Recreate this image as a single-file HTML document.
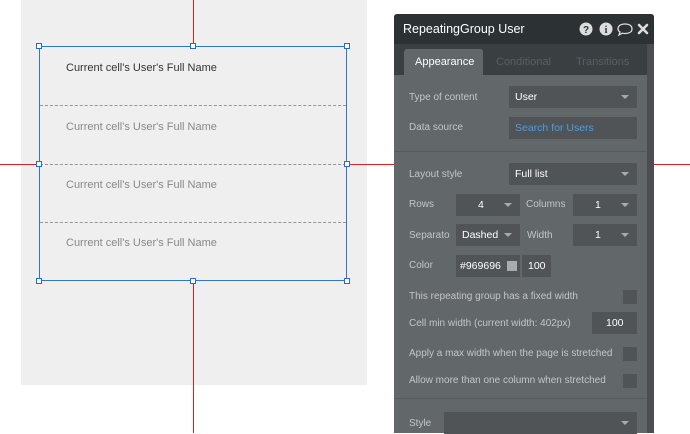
<!DOCTYPE html><html><head><style>
*{margin:0;padding:0;box-sizing:border-box}
body{width:690px;height:433px;background:#fff;position:relative;overflow:hidden;font-family:"Liberation Sans",sans-serif}
.a{position:absolute}
.cell{position:absolute;left:66px;font-size:11px;color:#888}
.p{font-size:10px;color:#c3c6c8}
.in{position:absolute;background:#505457;color:#fff;font-size:10.5px;padding-left:6px;display:flex;align-items:center}
.dd:after{content:"";position:absolute;right:8px;top:50%;margin-top:-2px;border-left:4px solid transparent;border-right:4px solid transparent;border-top:4px solid #aaa}
.cb{position:absolute;left:623px;width:14px;height:14px;background:#505457}
.h{position:absolute;width:6px;height:6px;border:1px solid #1a6ee0;background:#fff}
</style></head><body>
<div class="a" style="left:21px;top:0;width:346px;height:385px;background:#efefef"></div>
<div class="a" style="left:193px;top:0;width:1px;height:433px;background:#e02020"></div>
<div class="a" style="left:0;top:164px;width:690px;height:1px;background:#e02020"></div>
<div class="a" style="left:39px;top:46px;width:308px;height:235px;border:1.5px solid #2f78c8;background:#efefef"></div>
<div class="a" style="left:40px;top:105px;width:306px;border-top:1px dashed #969696"></div>
<div class="a" style="left:40px;top:164px;width:306px;border-top:1px dashed #969696"></div>
<div class="a" style="left:40px;top:222px;width:306px;border-top:1px dashed #969696"></div>
<div class="cell" style="top:62px;color:#333">Current cell's User's Full Name</div>
<div class="cell" style="top:121px">Current cell's User's Full Name</div>
<div class="cell" style="top:179px">Current cell's User's Full Name</div>
<div class="cell" style="top:237px">Current cell's User's Full Name</div>
<div class="h" style="left:36px;top:43px"></div><div class="h" style="left:190px;top:43px"></div><div class="h" style="left:344px;top:43px"></div>
<div class="h" style="left:36px;top:161px"></div><div class="h" style="left:344px;top:161px"></div>
<div class="h" style="left:36px;top:278px"></div><div class="h" style="left:190px;top:278px"></div><div class="h" style="left:344px;top:278px"></div>

<div class="a" style="left:394px;top:14px;width:260px;height:419px;background:#62676a;border-radius:3px 3px 0 0"></div>
<div class="a" style="left:647px;top:44px;width:7px;height:389px;background:#4a4e51"></div>
<div class="a" style="left:394px;top:14px;width:260px;height:30px;background:#2c3133;border-radius:3px 3px 0 0"></div>
<div class="a" style="left:403px;top:22px;font-size:12.5px;color:#fff">RepeatingGroup User</div>
<svg class="a" style="left:578px;top:21px" width="74" height="16" viewBox="0 0 74 16">
<circle cx="8" cy="8" r="6.5" fill="#ddd"/><text x="8" y="12" font-size="10" font-weight="bold" text-anchor="middle" fill="#2c3133" font-family="Liberation Sans">?</text>
<circle cx="28" cy="8" r="6.5" fill="#ddd"/><text x="28" y="12" font-size="10" font-weight="bold" text-anchor="middle" fill="#2c3133" font-family="Liberation Serif">i</text>
<path d="M40 8 C40 4.5 43 3 47 3 C51 3 54 4.5 54 8 C54 11 51 12.5 47 12.5 C46 12.5 45 12.4 44.5 12.2 L41 14 L42 11 C40.8 10.2 40 9.2 40 8 Z" fill="none" stroke="#ddd" stroke-width="1.3"/>
<path d="M61 4 L69 12 M69 4 L61 12" stroke="#ddd" stroke-width="2.6" stroke-linecap="round"/>
</svg>
<div class="a" style="left:394px;top:44px;width:253px;height:31px;background:#3a3f42"></div>
<div class="a" style="left:404px;top:49px;width:79px;height:26px;background:#62676a;border-radius:3px 3px 0 0"></div>
<div class="a" style="left:415px;top:56px;font-size:11px;color:#fff">Appearance</div>
<div class="a" style="left:496px;top:56px;font-size:11px;color:#5a5f62">Conditional</div>
<div class="a" style="left:576px;top:56px;font-size:11px;color:#5a5f62">Transitions</div>
<div class="a p" style="left:409px;top:92px">Type of content</div>
<div class="in dd" style="left:509px;top:86px;width:128px;height:22px">User</div>
<div class="a p" style="left:409px;top:122px">Data source</div>
<div class="in" style="left:509px;top:117px;width:128px;height:22px;color:#4a9de8">Search for Users</div>
<div class="a" style="left:394px;top:151px;width:253px;height:1px;background:#575b5e"></div>
<div class="a p" style="left:409px;top:169px">Layout style</div>
<div class="in dd" style="left:509px;top:163px;width:128px;height:22px">Full list</div>
<div class="a p" style="left:409px;top:199px">Rows</div>
<div class="in dd" style="left:456px;top:194px;width:64px;height:22px;padding-left:22px">4</div>
<div class="a p" style="left:526px;top:199px">Columns</div>
<div class="in dd" style="left:573px;top:194px;width:64px;height:22px;padding-left:22px">1</div>
<div class="a p" style="left:409px;top:230px">Separato</div>
<div class="in dd" style="left:456px;top:224px;width:64px;height:22px">Dashed</div>
<div class="a p" style="left:527px;top:230px">Width</div>
<div class="in dd" style="left:573px;top:224px;width:64px;height:22px;padding-left:22px">1</div>
<div class="a p" style="left:409px;top:260px">Color</div>
<div class="in" style="left:456px;top:255px;width:64px;height:22px;padding-left:4px">#969696<span style="display:inline-block;width:10px;height:10px;background:#aaa;margin-left:6px"></span></div>
<div class="in" style="left:522px;top:255px;width:29px;height:22px;padding-left:6px">100</div>
<div class="a p" style="left:409px;top:291px">This repeating group has a fixed width</div>
<div class="cb" style="top:290px"></div>
<div class="a p" style="left:409px;top:318px">Cell min width (current width: 402px)</div>
<div class="in" style="left:592px;top:312px;width:45px;height:22px;padding-left:14px">100</div>
<div class="a p" style="left:409px;top:348px">Apply a max width when the page is stretched</div>
<div class="cb" style="top:347px"></div>
<div class="a p" style="left:409px;top:375px">Allow more than one column when stretched</div>
<div class="cb" style="top:374px"></div>
<div class="a" style="left:394px;top:398px;width:253px;height:1px;background:#575b5e"></div>
<div class="a p" style="left:409px;top:418px">Style</div>
<div class="in dd" style="left:444px;top:412px;width:193px;height:22px"></div>
</body></html>
